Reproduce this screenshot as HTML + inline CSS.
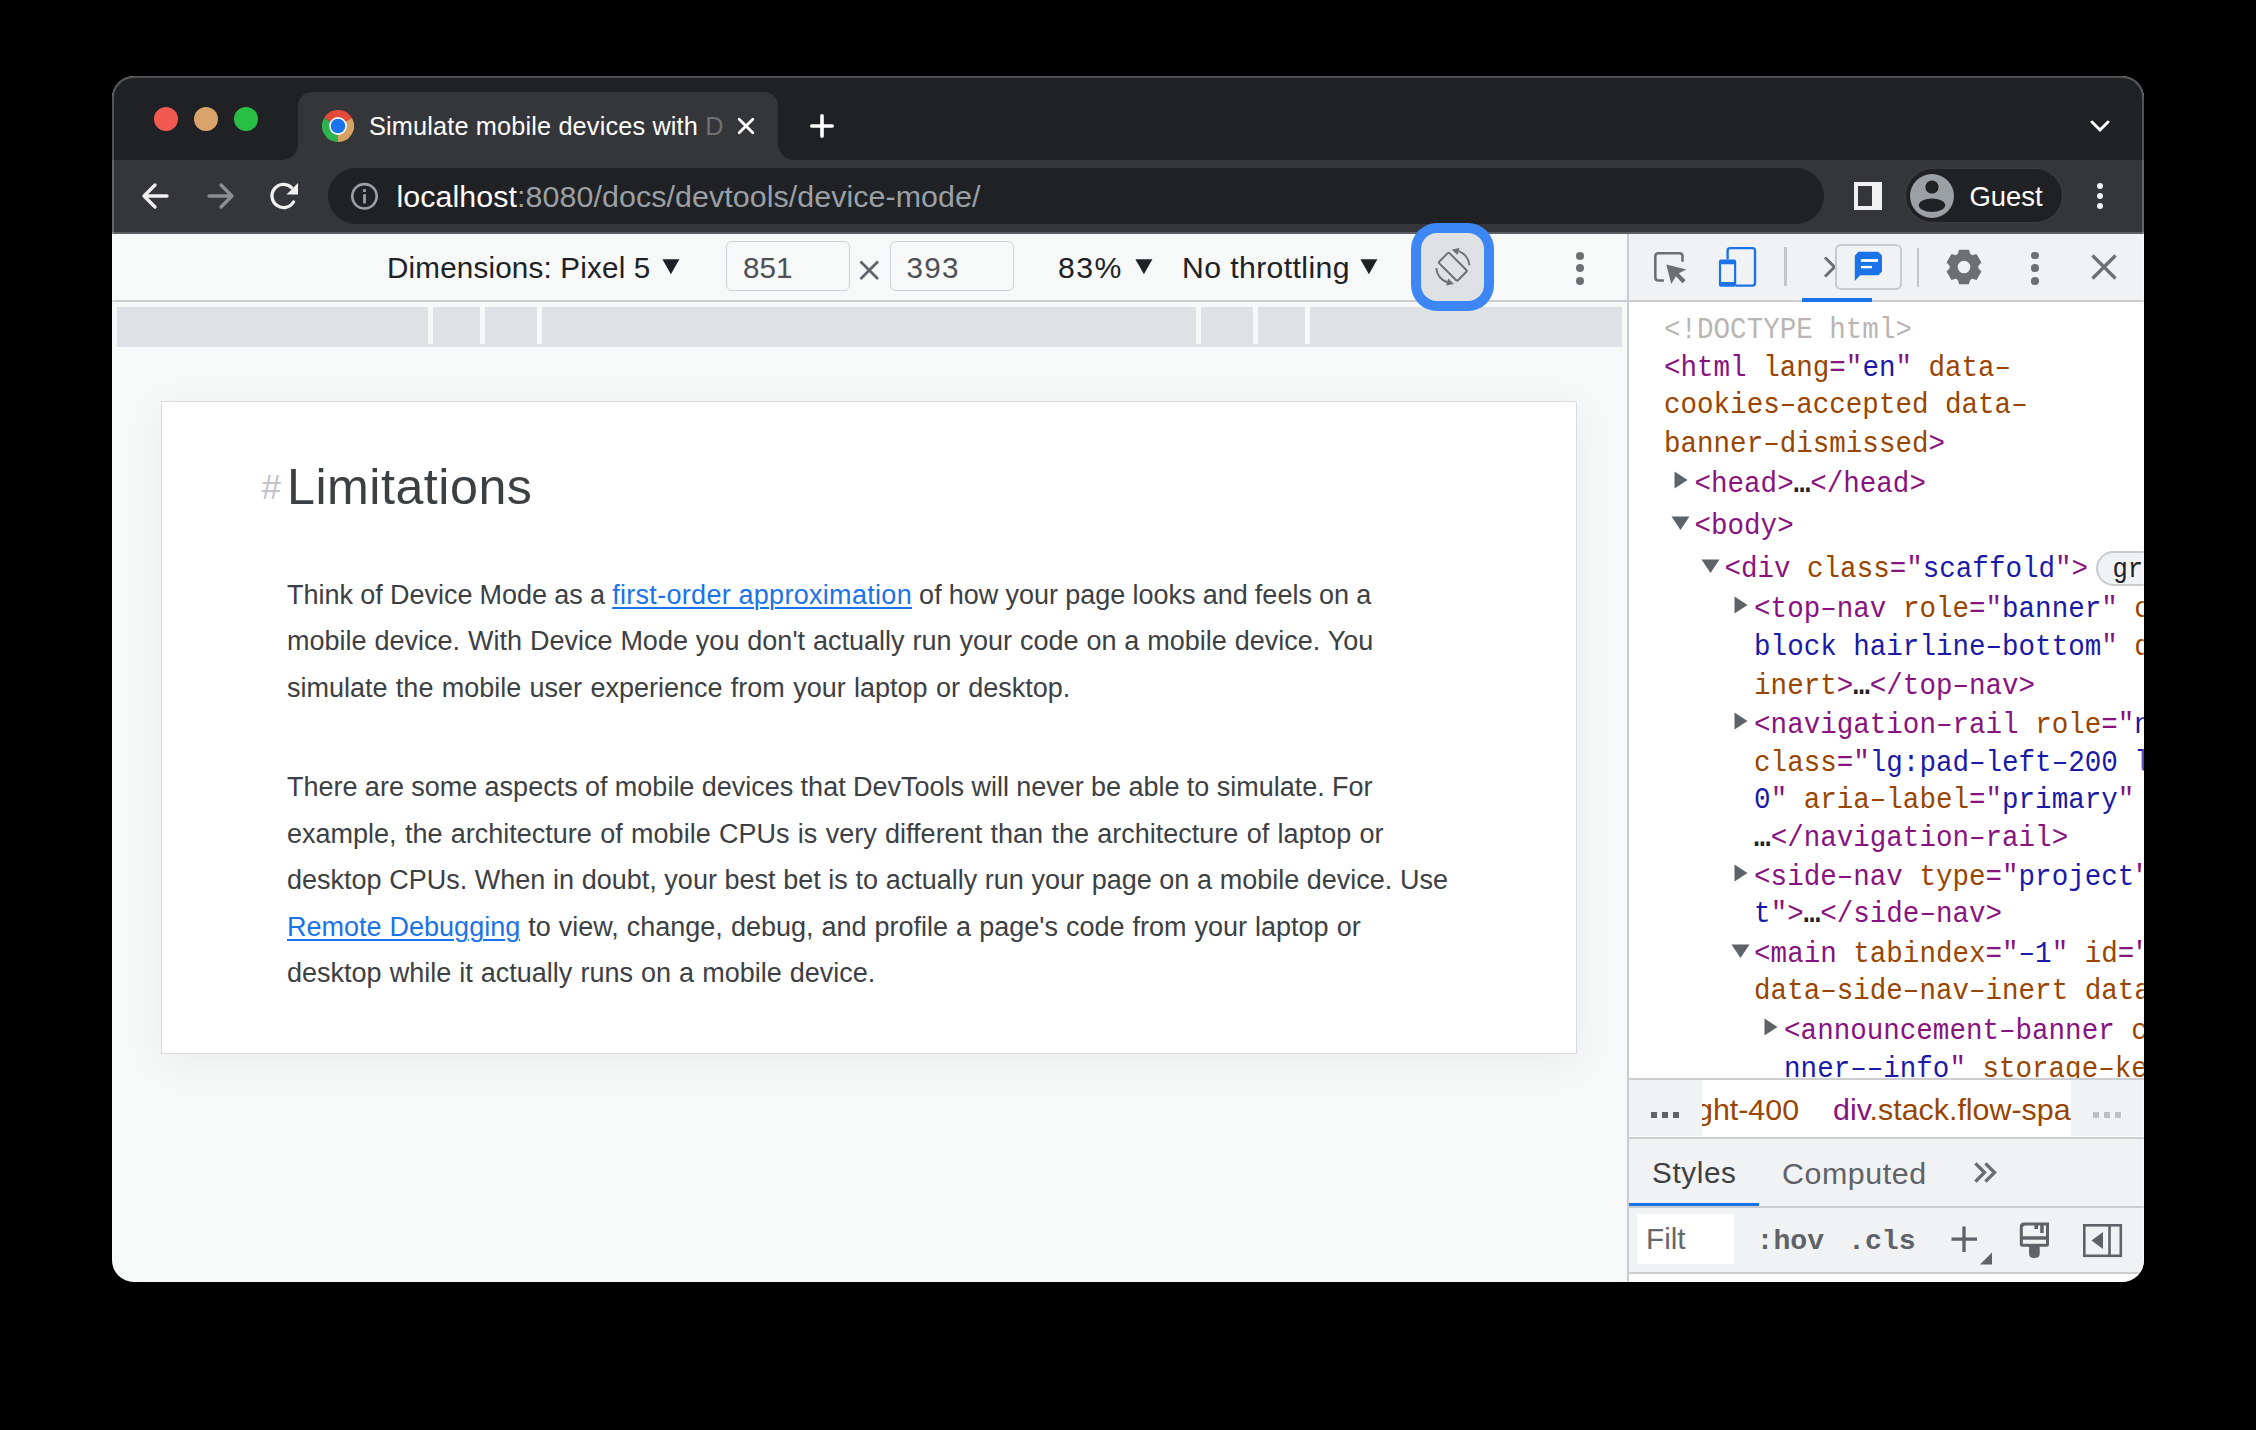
<!DOCTYPE html>
<html><head><meta charset="utf-8">
<style>
html,body{margin:0;padding:0}
body{width:2256px;height:1430px;background:#000;position:relative;overflow:hidden;font-family:"Liberation Sans",sans-serif}
.a{position:absolute}
.t{position:absolute;white-space:pre;line-height:1em}
.tg{color:#881280}.an{color:#994500}.av{color:#1a1aa6}.dt{color:#bab5b2}.el{color:#202124;font-weight:bold}
.mt{transform:scaleY(1.1);transform-origin:0 0.76em}
.m{position:absolute;white-space:pre;line-height:1em;font-family:"Liberation Mono",monospace}
#win{position:absolute;left:112px;top:76px;width:2032px;height:1206px;border-radius:22px;overflow:hidden;background:#f7f8f8}
#in{position:absolute;left:-112px;top:-76px;width:2256px;height:1430px}
#frame{position:absolute;left:112px;top:76px;width:2032px;height:1206px;border-radius:22px;box-shadow:inset 0 0 0 2px rgba(255,255,255,.22);pointer-events:none}
</style></head><body>
<div id="win"><div id="in">

<!-- TAB STRIP -->
<div class="a" style="left:112px;top:76px;width:2032px;height:84px;background:#202124"></div>
<div class="a" style="left:154px;top:107px;width:24px;height:24px;border-radius:50%;background:#f05a50"></div>
<div class="a" style="left:194px;top:107px;width:24px;height:24px;border-radius:50%;background:#d8a46c"></div>
<div class="a" style="left:234px;top:107px;width:24px;height:24px;border-radius:50%;background:#29bf45"></div>

<!-- active tab -->
<div class="a" style="left:298px;top:92px;width:480px;height:68px;background:#35363a;border-radius:14px 14px 0 0"></div>
<div class="a" style="left:282px;top:144px;width:16px;height:16px;background:radial-gradient(circle at 0 0,transparent 15.5px,#35363a 16.5px)"></div>
<div class="a" style="left:778px;top:144px;width:16px;height:16px;background:radial-gradient(circle at 100% 0,transparent 15.5px,#35363a 16.5px)"></div>

<!-- chrome logo -->
<svg class="a" style="left:321.8px;top:109.9px" width="32" height="32" viewBox="-16 -16 32 32">
<path d="M0 0 L-13.86 -8 A16 16 0 0 1 13.86 -8 Z" fill="#e24b3b"/>
<path d="M0 0 L13.86 -8 A16 16 0 0 1 0 16 Z" fill="#d9a265"/>
<path d="M0 0 L0 16 A16 16 0 0 1 -13.86 -8 Z" fill="#2db24d"/>
<circle r="8.9" fill="#fff"/><circle r="7.3" fill="#1a73e8"/>
</svg>
<div class="t" style="left:369px;top:113.6px;font-size:25.3px;color:#fff;letter-spacing:0.15px">Simulate mobile devices with <span style="color:#707174">D</span></div>
<svg class="a" style="left:736px;top:116px" width="20" height="20" viewBox="0 0 20 20"><path d="M3.2 3.2 L16.8 16.8 M16.8 3.2 L3.2 16.8" stroke="#fff" stroke-width="2.8" stroke-linecap="round"/></svg>
<svg class="a" style="left:808px;top:112px" width="28" height="28" viewBox="0 0 28 28"><path d="M14 3.8 V24.2 M3.8 14 H24.2" stroke="#fff" stroke-width="3.6" stroke-linecap="round"/></svg>
<svg class="a" style="left:2088px;top:118px" width="24" height="16" viewBox="0 0 24 16"><path d="M4 4 L12 12 L20 4" stroke="#fff" stroke-width="3" fill="none" stroke-linecap="round"/></svg>

<!-- TOOLBAR -->
<div class="a" style="left:112px;top:160px;width:2032px;height:72px;background:#35363a"></div>
<div class="a" style="left:112px;top:232px;width:2032px;height:2px;background:#5b5e62"></div>
<div class="a" style="left:328px;top:168px;width:1496px;height:56px;border-radius:28px;background:#202124"></div>
<svg class="a" style="left:140px;top:181px" width="32" height="30" viewBox="0 0 32 30"><path d="M27 15 H5 M15 4 L4 15 L15 26" stroke="#f1f1f1" stroke-width="3.3" fill="none" stroke-linecap="round" stroke-linejoin="round"/></svg>
<svg class="a" style="left:204px;top:181px" width="32" height="30" viewBox="0 0 32 30"><path d="M5 15 H27 M17 4 L28 15 L17 26" stroke="#8e8f91" stroke-width="3.3" fill="none" stroke-linecap="round" stroke-linejoin="round"/></svg>
<svg class="a" style="left:268px;top:180px" width="34" height="32" viewBox="0 0 34 32"><path d="M25.5 22 A11.6 11.6 0 1 1 23.5 7.5" stroke="#f1f1f1" stroke-width="3.3" fill="none" stroke-linecap="round"/><path d="M30 3 V14.5 H18.5 Z" fill="#f1f1f1"/></svg>
<svg class="a" style="left:350px;top:182px" width="30" height="30" viewBox="0 0 30 30"><circle cx="14.5" cy="14.3" r="12.2" stroke="#9aa0a6" stroke-width="2.6" fill="none"/><rect x="13.1" y="12.2" width="2.8" height="9.3" fill="#9aa0a6"/><rect x="13.1" y="7.2" width="2.8" height="2.8" fill="#9aa0a6"/></svg>
<div class="t" style="left:396.5px;top:180.5px;font-size:30.4px;color:#fff;letter-spacing:0.07px">localhost<span style="color:#9aa0a6">:8080/docs/devtools/device-mode/</span></div>
<!-- side panel icon -->
<div class="a" style="left:1854px;top:182px;width:28px;height:28px;background:#f1f1f1"></div>
<div class="a" style="left:1858px;top:186px;width:14px;height:20px;background:#35363a"></div>
<!-- guest pill -->
<div class="a" style="left:1906px;top:169px;width:156px;height:53px;border-radius:27px;background:#202124;box-shadow:0 0 0 1.5px #3b3c40"></div>
<svg class="a" style="left:1910px;top:173.6px" width="44" height="44" viewBox="0 0 44 44"><circle cx="22" cy="22" r="22" fill="#9aa0a6"/><circle cx="22" cy="13" r="6.6" fill="#202124"/><ellipse cx="22" cy="31.2" rx="13.2" ry="6.8" fill="#202124"/></svg>
<div class="t" style="left:1969.5px;top:182.9px;font-size:27.4px;color:#fff">Guest</div>
<div class="a" style="left:2096.6px;top:182.6px;width:6.4px;height:6.4px;border-radius:50%;background:#f1f1f1"></div>
<div class="a" style="left:2096.6px;top:192.9px;width:6.4px;height:6.4px;border-radius:50%;background:#f1f1f1"></div>
<div class="a" style="left:2096.6px;top:203.1px;width:6.4px;height:6.4px;border-radius:50%;background:#f1f1f1"></div>

<!-- DEVICE TOOLBAR -->
<div class="a" style="left:112px;top:234px;width:1515px;height:66px;background:#f7f8f8"></div>
<div class="a" style="left:112px;top:300px;width:2032px;height:2px;background:#cbcdd1"></div>
<div class="t" style="left:387px;top:253.2px;font-size:29.6px;color:#202124;letter-spacing:0.19px">Dimensions: Pixel 5</div>
<svg class="a" style="left:662px;top:258.5px" width="18" height="16" viewBox="0 0 18 16"><path d="M0.4 0.3 H17.4 L8.9 15.3 Z" fill="#202124"/></svg>
<div class="a" style="left:725.5px;top:241.2px;width:122.3px;height:47.4px;border:1.5px solid #cfd1d4;border-radius:6px"></div>
<div class="t" style="left:743px;top:253.2px;font-size:29.6px;color:#4d5156">851</div>
<svg class="a" style="left:858px;top:259px" width="23" height="23" viewBox="0 0 23 23"><path d="M2.5 2.5 L20 20 M20 2.5 L2.5 20" stroke="#5f6368" stroke-width="2.7"/></svg>
<div class="a" style="left:889.5px;top:241.2px;width:122.3px;height:47.4px;border:1.5px solid #cfd1d4;border-radius:6px"></div>
<div class="t" style="left:906.5px;top:253.2px;font-size:29.6px;color:#4d5156;letter-spacing:1.3px">393</div>
<div class="t" style="left:1058px;top:253.2px;font-size:30.2px;color:#202124;letter-spacing:1.4px">83%</div>
<svg class="a" style="left:1134.5px;top:258.5px" width="18" height="16" viewBox="0 0 18 16"><path d="M0.4 0.3 H17.4 L8.9 15.3 Z" fill="#202124"/></svg>
<div class="t" style="left:1182px;top:253.2px;font-size:30.2px;color:#202124;letter-spacing:0.4px">No throttling</div>
<svg class="a" style="left:1360px;top:258.5px" width="18" height="16" viewBox="0 0 18 16"><path d="M0.4 0.3 H17.4 L8.9 15.3 Z" fill="#202124"/></svg>
<!-- rotate button -->
<div class="a" style="z-index:5;left:1411.2px;top:222.7px;width:82.4px;height:88.3px;border-radius:26px;background:#3d87f5"></div>
<div class="a" style="z-index:5;left:1421.3px;top:233.3px;width:62.7px;height:67.6px;border-radius:16px;background:#dfe1e5"></div>
<svg class="a" style="z-index:6;left:1430px;top:246px" width="46" height="44" viewBox="0 0 46 44">
<g transform="translate(22.85,20.7) rotate(-45)"><rect x="-7.2" y="-13.2" width="14.4" height="26.4" rx="1.6" fill="none" stroke="#6e6f71" stroke-width="2"/></g>
<path d="M28.6 5.1 A16.6 16.6 0 0 1 39.4 19.25" fill="none" stroke="#6e6f71" stroke-width="2"/>
<path d="M17.1 36.3 A16.6 16.6 0 0 1 6.3 22.15" fill="none" stroke="#6e6f71" stroke-width="2"/>
<path d="M21.8 3.4 L29.6 2.0 L27.4 9.0 Z" fill="#6e6f71"/>
<path d="M23.9 38.0 L16.1 39.4 L18.3 32.4 Z" fill="#6e6f71"/>
</svg>
<div class="a" style="left:1576.3px;top:251.6px;width:8px;height:8px;border-radius:50%;background:#6e6f71"></div>
<div class="a" style="left:1576.3px;top:264.4px;width:8px;height:8px;border-radius:50%;background:#6e6f71"></div>
<div class="a" style="left:1576.3px;top:276.6px;width:8px;height:8px;border-radius:50%;background:#6e6f71"></div>

<!-- DEVTOOLS -->
<div class="a" style="left:1627px;top:234px;width:2px;height:1048px;background:#cbcdd1"></div>
<div class="a" style="left:1629px;top:234px;width:515px;height:66px;background:#f1f2f3"></div>
<div class="a" style="left:1629px;top:302px;width:515px;height:776px;background:#fff"></div>
<!-- devtools toolbar icons -->
<svg class="a" style="left:1652px;top:250px" width="36" height="36" viewBox="0 0 36 36">
<path d="M11.9 30.5 H6.3 Q3.3 30.5 3.3 27.5 V6.3 Q3.3 3.3 6.3 3.3 H27.5 Q30.5 3.3 30.5 6.3 V11.8" fill="none" stroke="#6e6f71" stroke-width="2.6"/>
<path d="M14.3 14.5 L34.5 19.5 L26.8 23.3 L33.6 30.2 L30.6 33.2 L23.9 26.3 L19.3 34.1 Z" fill="#6e6f71"/>
</svg>
<svg class="a" style="left:1717px;top:245px" width="42" height="44" viewBox="0 0 42 44">
<path d="M10.6 14.4 V5.6 Q10.6 3.1 13.1 3.1 H35.5 Q38 3.1 38 5.6 V38.1 Q38 40.6 35.5 40.6 H19" fill="none" stroke="#1a73e8" stroke-width="2.4"/>
<path fill-rule="evenodd" d="M3.9 14.4 H17.2 Q19.2 14.4 19.2 16.4 V39.8 Q19.2 41.8 17.2 41.8 H3.9 Q1.9 41.8 1.9 39.8 V16.4 Q1.9 14.4 3.9 14.4 Z M4.1 19.2 V37 H17 V19.2 Z" fill="#1a73e8"/>
</svg>
<div class="a" style="left:1784.3px;top:247px;width:2.7px;height:39px;background:#c4c6ca"></div>
<svg class="a" style="left:1822px;top:255px" width="16" height="24" viewBox="0 0 16 24"><path d="M3 2.5 L12.5 12 L3 21.5" fill="none" stroke="#6e6f71" stroke-width="3"/></svg>
<div class="a" style="left:1835px;top:244.1px;width:62.7px;height:41.7px;border:2px solid #c9cacd;border-radius:6px;background:#f1f2f3"></div>
<svg class="a" style="left:1854px;top:251px" width="30" height="31" viewBox="0 0 30 31">
<path d="M0.8 4.6 L4.4 0.8 H24.2 L28 4.6 V20.6 L24.4 24.2 H6.2 L0.8 29.9 Z" fill="#1a73e8"/>
<rect x="6.9" y="8.1" width="17.1" height="2.8" fill="#fff"/><rect x="6.9" y="14.9" width="11" height="2.4" fill="#fff"/>
</svg>
<div class="a" style="left:1802px;top:298px;width:70px;height:4px;background:#1a73e8"></div>
<div class="a" style="left:1917px;top:247.5px;width:2px;height:39px;background:#c4c6ca"></div>
<svg class="a" style="left:1945.2px;top:248.1px" width="38" height="38" viewBox="-19 -19 38 38">
<path fill="#6e6f71" fill-rule="evenodd" d="M-6.20 -13.00 L-4.90 -17.30 L4.90 -17.30 L6.20 -13.00 L8.16 -11.87 L12.53 -12.89 L17.43 -4.41 L14.36 -1.13 L14.36 1.13 L17.43 4.41 L12.53 12.89 L8.16 11.87 L6.20 13.00 L4.90 17.30 L-4.90 17.30 L-6.20 13.00 L-8.16 11.87 L-12.53 12.89 L-17.43 4.41 L-14.36 1.13 L-14.36 -1.13 L-17.43 -4.41 L-12.53 -12.89 L-8.16 -11.87 Z M6.3 0 A6.3 6.3 0 1 0 -6.3 0 A6.3 6.3 0 1 0 6.3 0 Z"/>
</svg>
<div class="a" style="left:2031.2px;top:251.7px;width:7.6px;height:7.6px;border-radius:50%;background:#6e6f71"></div>
<div class="a" style="left:2031.2px;top:264.4px;width:7.6px;height:7.6px;border-radius:50%;background:#6e6f71"></div>
<div class="a" style="left:2031.2px;top:277.1px;width:7.6px;height:7.6px;border-radius:50%;background:#6e6f71"></div>
<svg class="a" style="left:2090px;top:253px" width="28" height="28" viewBox="0 0 28 28"><path d="M2.5 2.5 L25.5 25.5 M25.5 2.5 L2.5 25.5" stroke="#6e6f71" stroke-width="3.2"/></svg>

<!-- ELEMENTS TREE -->
<div class="a" style="left:1629px;top:302px;width:515px;height:776px;overflow:hidden">
<div class="a" style="left:-1629px;top:-302px;width:2256px;height:1430px">
<div class="m mt" style="left:1664px;top:316.5px;font-size:27.55px"><span class=dt>&lt;!DOCTYPE html&gt;</span></div>
<div class="m mt" style="left:1664px;top:354.6px;font-size:27.55px"><span class=tg>&lt;html</span> <span class=an>lang</span><span class=tg>="</span><span class=av>en</span><span class=tg>"</span> <span class=an>data&#8211;</span></div>
<div class="m mt" style="left:1664px;top:392.4px;font-size:27.55px"><span class=an>cookies&#8211;accepted data&#8211;</span></div>
<div class="m mt" style="left:1664px;top:430.6px;font-size:27.55px"><span class=an>banner&#8211;dismissed</span><span class=tg>&gt;</span></div>
<div class="m mt" style="left:1694.5px;top:470.9px;font-size:27.55px"><span class=tg>&lt;head&gt;</span><span class=el>…</span><span class=tg>&lt;/head&gt;</span></div>
<svg class="a" style="left:1674.2px;top:470.8px" width="14" height="18" viewBox="0 0 14 18"><path d="M0.5 0.5 L13.5 9 L0.5 17.5 Z" fill="#5f6368"/></svg>
<div class="m mt" style="left:1694.5px;top:512.6px;font-size:27.55px"><span class=tg>&lt;body&gt;</span></div>
<svg class="a" style="left:1671.2px;top:515.5px" width="19" height="14" viewBox="0 0 19 14"><path d="M0.5 0.5 H18.5 L9.5 14 Z" fill="#5f6368"/></svg>
<div class="m mt" style="left:1724.4px;top:555.7px;font-size:27.55px"><span class=tg>&lt;div</span> <span class=an>class</span><span class=tg>="</span><span class=av>scaffold</span><span class=tg>"&gt;</span></div>
<svg class="a" style="left:1701.1px;top:558.6px" width="19" height="14" viewBox="0 0 19 14"><path d="M0.5 0.5 H18.5 L9.5 14 Z" fill="#5f6368"/></svg>
<div class="m mt" style="left:1754.1px;top:595.8px;font-size:27.55px"><span class=tg>&lt;top&#8211;nav</span> <span class=an>role</span><span class=tg>="</span><span class=av>banner</span><span class=tg>"</span> <span class=an>c</span></div>
<svg class="a" style="left:1733.8px;top:595.7px" width="14" height="18" viewBox="0 0 14 18"><path d="M0.5 0.5 L13.5 9 L0.5 17.5 Z" fill="#5f6368"/></svg>
<div class="m mt" style="left:1754.1px;top:633.9px;font-size:27.55px"><span class=av>block hairline&#8211;bottom</span><span class=tg>"</span> <span class=an>d</span></div>
<div class="m mt" style="left:1754.1px;top:672.6px;font-size:27.55px"><span class=an>inert</span><span class=tg>&gt;</span><span class=el>…</span><span class=tg>&lt;/top&#8211;nav&gt;</span></div>
<div class="m mt" style="left:1754.1px;top:711.9px;font-size:27.55px"><span class=tg>&lt;navigation&#8211;rail</span> <span class=an>role</span><span class=tg>="</span><span class=av>n</span></div>
<svg class="a" style="left:1733.8px;top:711.8px" width="14" height="18" viewBox="0 0 14 18"><path d="M0.5 0.5 L13.5 9 L0.5 17.5 Z" fill="#5f6368"/></svg>
<div class="m mt" style="left:1754.1px;top:749.7px;font-size:27.55px"><span class=an>class</span><span class=tg>="</span><span class=av>lg:pad&#8211;left&#8211;200 l</span></div>
<div class="m mt" style="left:1754.1px;top:787.4px;font-size:27.55px"><span class=av>0</span><span class=tg>"</span> <span class=an>aria&#8211;label</span><span class=tg>="</span><span class=av>primary</span><span class=tg>"</span></div>
<div class="m mt" style="left:1754.1px;top:824.6px;font-size:27.55px"><span class=el>…</span><span class=tg>&lt;/navigation&#8211;rail&gt;</span></div>
<div class="m mt" style="left:1754.1px;top:864.3px;font-size:27.55px"><span class=tg>&lt;side&#8211;nav</span> <span class=an>type</span><span class=tg>="</span><span class=av>project</span><span class=tg>"</span></div>
<svg class="a" style="left:1733.8px;top:864.2px" width="14" height="18" viewBox="0 0 14 18"><path d="M0.5 0.5 L13.5 9 L0.5 17.5 Z" fill="#5f6368"/></svg>
<div class="m mt" style="left:1754.1px;top:901.3px;font-size:27.55px"><span class=av>t</span><span class=tg>"&gt;</span><span class=el>…</span><span class=tg>&lt;/side&#8211;nav&gt;</span></div>
<div class="m mt" style="left:1754.1px;top:940.9px;font-size:27.55px"><span class=tg>&lt;main</span> <span class=an>tabindex</span><span class=tg>="</span><span class=av>&#8211;1</span><span class=tg>"</span> <span class=an>id</span><span class=tg>="</span></div>
<svg class="a" style="left:1730.8px;top:943.8px" width="19" height="14" viewBox="0 0 19 14"><path d="M0.5 0.5 H18.5 L9.5 14 Z" fill="#5f6368"/></svg>
<div class="m mt" style="left:1754.1px;top:977.9px;font-size:27.55px"><span class=an>data&#8211;side&#8211;nav&#8211;inert data</span></div>
<div class="m mt" style="left:1784.1px;top:1018.4px;font-size:27.55px"><span class=tg>&lt;announcement&#8211;banner</span> <span class=an>c</span></div>
<svg class="a" style="left:1763.8px;top:1018.3px" width="14" height="18" viewBox="0 0 14 18"><path d="M0.5 0.5 L13.5 9 L0.5 17.5 Z" fill="#5f6368"/></svg>
<div class="m mt" style="left:1784.1px;top:1055.6px;font-size:27.55px"><span class=av>nner&#8211;&#8211;info</span><span class=tg>"</span> <span class=an>storage&#8211;ke</span></div>
<div class="a" style="left:2096px;top:551.2px;width:80px;height:30.6px;border:2px solid #c9cbce;border-radius:18px;background:#f1f2f3"></div>
<div class="m mt" style="left:2112.5px;top:558px;font-size:25.5px;color:#202124">grid</div>
</div></div>

<!-- BREADCRUMBS / STYLES -->
<div class="a" style="left:1629px;top:1078px;width:515px;height:2px;background:#cbcdd1"></div>
<div class="a" style="left:1629px;top:1080px;width:515px;height:57px;background:#fff"></div>
<div class="a" style="left:1629px;top:1080px;width:73px;height:55.5px;background:#f1f2f3"></div>
<div class="a" style="left:2071px;top:1080px;width:73px;height:55.5px;background:#f1f2f3"></div>
<div class="a" style="left:1702px;top:1080px;width:369px;height:57px;overflow:hidden">
<div class="t" style="left:-6px;top:1093.5px;font-size:30.4px;margin-top:-1080px;color:#994500">ght-400</div>
<div class="t" style="left:131px;top:1093.5px;font-size:30.4px;margin-top:-1080px;color:#994500"><span style="color:#881280">div</span>.stack.flow-space</div>
</div>
<div class="a" style="left:1651px;top:1112px;width:6px;height:6px;background:#5f6368"></div>
<div class="a" style="left:1662px;top:1112px;width:6px;height:6px;background:#5f6368"></div>
<div class="a" style="left:1673px;top:1112px;width:6px;height:6px;background:#5f6368"></div>
<div class="a" style="left:2093px;top:1112px;width:6px;height:6px;background:#bdc1c6"></div>
<div class="a" style="left:2104px;top:1112px;width:6px;height:6px;background:#bdc1c6"></div>
<div class="a" style="left:2115px;top:1112px;width:6px;height:6px;background:#bdc1c6"></div>
<div class="a" style="left:1629px;top:1137px;width:515px;height:2px;background:#cbcdd1"></div>
<div class="a" style="left:1629px;top:1139px;width:515px;height:66px;background:#f1f2f3"></div>
<div class="t" style="left:1652px;top:1157.5px;font-size:29.7px;color:#3c4043;letter-spacing:0.6px">Styles</div>
<div class="t" style="left:1782px;top:1157.5px;font-size:30.4px;color:#5f6368;letter-spacing:0.55px">Computed</div>
<svg class="a" style="left:1973px;top:1161px" width="26" height="23" viewBox="0 0 26 23"><path d="M2.4 2.4 L11.5 11.5 L2.4 20.6 M12.4 2.4 L21.5 11.5 L12.4 20.6" fill="none" stroke="#6b6d70" stroke-width="3.4"/></svg>
<div class="a" style="left:1629px;top:1203px;width:130px;height:4px;background:#1a73e8"></div>
<div class="a" style="left:1629px;top:1205.5px;width:515px;height:2px;background:#cbcdd1"></div>
<div class="a" style="left:1629px;top:1207.5px;width:515px;height:64px;background:#f1f2f3"></div>
<div class="a" style="left:1637px;top:1214.3px;width:97px;height:49.7px;background:#fff"></div>
<div class="t" style="left:1646px;top:1223.6px;font-size:29.7px;color:#64686d">Filt</div>
<div class="m" style="left:1756.5px;top:1227.6px;font-size:28.2px;font-weight:bold;color:#5f6368">:hov</div>
<div class="m" style="left:1848px;top:1227.6px;font-size:28.2px;font-weight:bold;color:#5f6368">.cls</div>
<svg class="a" style="left:1949px;top:1224px" width="44" height="42" viewBox="0 0 44 42"><path d="M15 2.5 V28 M2.5 15.2 H28" stroke="#5f6368" stroke-width="3.3"/><path d="M43 28.5 V40.5 H31 Z" fill="#5f6368"/></svg>
<svg class="a" style="left:2017px;top:1220px" width="36" height="40" viewBox="0 0 36 40">
<path d="M2.8 6.8 Q2.8 2.4 7.2 2.4 H32 V24.3 Q32 26.8 29.5 26.8 H22.7 V33.9 Q22.7 37.9 17.4 37.9 Q12.1 37.9 12.1 33.9 V26.8 H5.3 Q2.8 26.8 2.8 24.3 Z" fill="#5f6368"/>
<path d="M8.6 5.6 H17.4 V9 H21 V5.6 H23.2 V12.9 H26.7 V5.6 H29 V16.2 H5.8 V8.4 Q5.8 5.6 8.6 5.6 Z" fill="#f1f2f3"/>
<rect x="5.8" y="19.7" width="23.2" height="4.1" fill="#f1f2f3"/>
</svg>
<svg class="a" style="left:2082px;top:1223px" width="42" height="36" viewBox="0 0 42 36"><rect x="2.3" y="2.3" width="36.5" height="30.5" fill="none" stroke="#5f6368" stroke-width="2.6"/><path d="M27.5 2.3 V32.8" stroke="#5f6368" stroke-width="2.6"/><path d="M21 9 V26 L9.5 17.5 Z" fill="#5f6368"/></svg>
<div class="a" style="left:1629px;top:1271.6px;width:515px;height:2.5px;background:#cbcdd1"></div>
<div class="a" style="left:1629px;top:1274px;width:515px;height:10px;background:#fff"></div>

<!-- VIEWPORT -->
<div class="a" style="left:117px;top:307px;width:1505px;height:40px;background:#dfe1e5"></div>
<div class="a" style="left:428.2px;top:307px;width:4.6px;height:37px;background:#f7f8f8"></div>
<div class="a" style="left:480px;top:307px;width:4.8px;height:37px;background:#f7f8f8"></div>
<div class="a" style="left:537px;top:307px;width:4.9px;height:37px;background:#f7f8f8"></div>
<div class="a" style="left:1196px;top:307px;width:5px;height:37px;background:#f7f8f8"></div>
<div class="a" style="left:1252.8px;top:307px;width:5.2px;height:37px;background:#f7f8f8"></div>
<div class="a" style="left:1305px;top:307px;width:5px;height:37px;background:#f7f8f8"></div>
<div class="a" style="left:161px;top:401px;width:1414px;height:651px;background:#fff;border:1px solid #dadce0;box-shadow:0 8px 40px rgba(0,0,0,.055)"></div>
<div class="t" style="left:261.5px;top:468.6px;font-size:35px;color:#bdc1c6">#</div>
<div class="t" style="left:287px;top:462.4px;font-size:50.2px;color:#3c4043;letter-spacing:0.5px">Limitations</div>
<div class="t" style="left:287px;top:581.6px;font-size:27px;color:#3c4043;word-spacing:-0.33px">Think of Device Mode as a <u style="color:#1a73e8;text-decoration-thickness:2px;text-underline-offset:3px;letter-spacing:0.3px">first-order approximation</u> of how your page looks and feels on a</div>
<div class="t" style="left:287px;top:628.1px;font-size:27px;color:#3c4043;word-spacing:0.44px">mobile device. With Device Mode you don't actually run your code on a mobile device. You</div>
<div class="t" style="left:287px;top:674.6px;font-size:27px;color:#3c4043;word-spacing:0.822px">simulate the mobile user experience from your laptop or desktop.</div>
<div class="t" style="left:287px;top:774.3px;font-size:27px;color:#3c4043;word-spacing:-0.16px">There are some aspects of mobile devices that DevTools will never be able to simulate. For</div>
<div class="t" style="left:287px;top:820.8px;font-size:27px;color:#3c4043;word-spacing:0.857px">example, the architecture of mobile CPUs is very different than the architecture of laptop or</div>
<div class="t" style="left:287px;top:867.3px;font-size:27px;color:#3c4043;word-spacing:0.133px">desktop CPUs. When in doubt, your best bet is to actually run your page on a mobile device. Use</div>
<div class="t" style="left:287px;top:913.8px;font-size:27px;color:#3c4043;word-spacing:0.521px"><u style="color:#1a73e8;text-decoration-thickness:2px;text-underline-offset:3px">Remote Debugging</u> to view, change, debug, and profile a page's code from your laptop or</div>
<div class="t" style="left:287px;top:960.3px;font-size:27px;color:#3c4043;word-spacing:0.562px">desktop while it actually runs on a mobile device.</div>

</div></div>
<div id="frame"></div>
</body></html>
